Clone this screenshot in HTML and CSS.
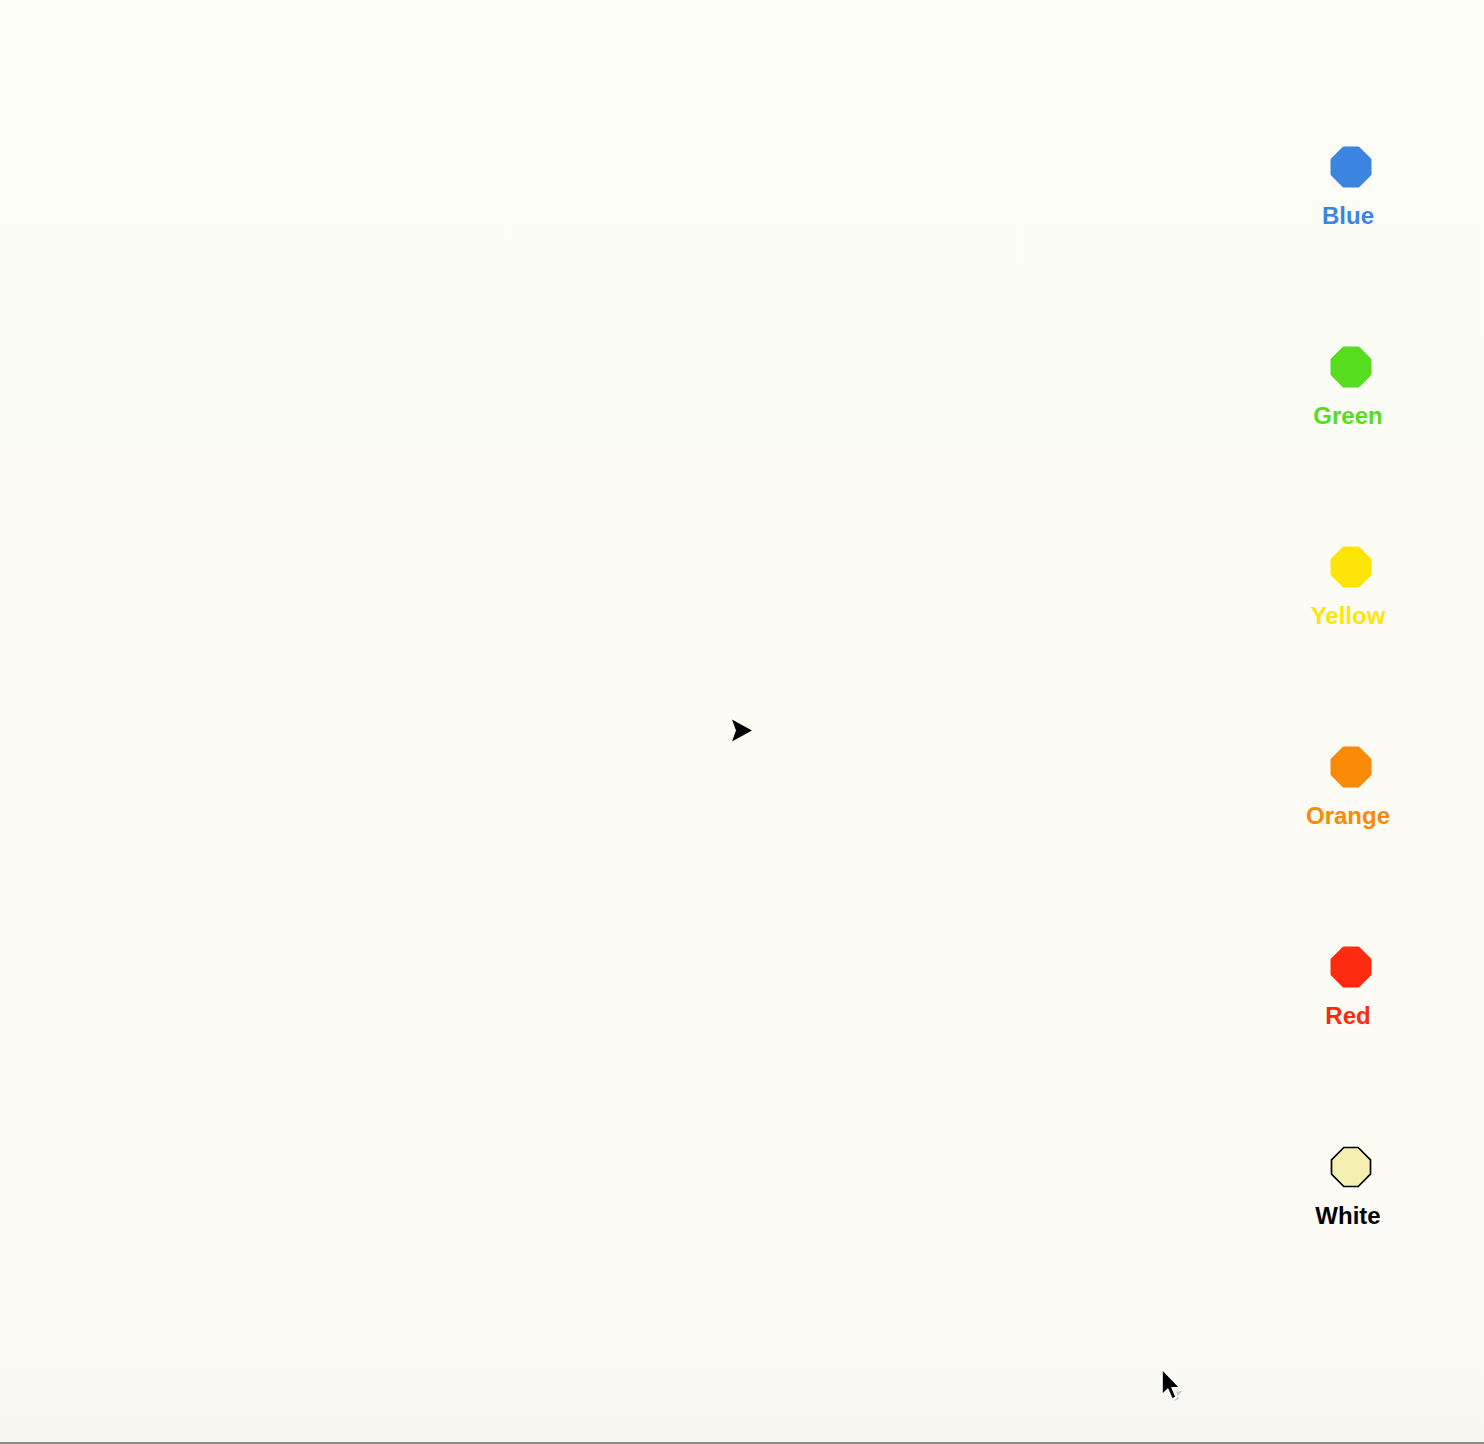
FILE: index.html
```html
<!DOCTYPE html>
<html>
<head>
<meta charset="utf-8">
<link rel="stylesheet" href="styles.css">
</head>
<body>
<div class="canvas">
  <div class="palette">
    <div class="swatch">
      <svg class="dot" viewBox="0 0 42 42"><polygon points="14,2.5 28,2.5 39.5,14 39.5,28 28,39.5 14,39.5 2.5,28 2.5,14" fill="#3b85e0" stroke="#3b85e0" stroke-width="4" stroke-linejoin="round"/></svg>
      <span class="label blue">Blue</span>
    </div>
    <div class="swatch">
      <svg class="dot" viewBox="0 0 42 42"><polygon points="14,2.5 28,2.5 39.5,14 39.5,28 28,39.5 14,39.5 2.5,28 2.5,14" fill="#56de1e" stroke="#56de1e" stroke-width="4" stroke-linejoin="round"/></svg>
      <span class="label green">Green</span>
    </div>
    <div class="swatch">
      <svg class="dot" viewBox="0 0 42 42"><polygon points="14,2.5 28,2.5 39.5,14 39.5,28 28,39.5 14,39.5 2.5,28 2.5,14" fill="#fde50a" stroke="#fde50a" stroke-width="4" stroke-linejoin="round"/></svg>
      <span class="label yellow">Yellow</span>
    </div>
    <div class="swatch">
      <svg class="dot" viewBox="0 0 42 42"><polygon points="14,2.5 28,2.5 39.5,14 39.5,28 28,39.5 14,39.5 2.5,28 2.5,14" fill="#f98a08" stroke="#f98a08" stroke-width="4" stroke-linejoin="round"/></svg>
      <span class="label orange">Orange</span>
    </div>
    <div class="swatch">
      <svg class="dot" viewBox="0 0 42 42"><polygon points="14,2.5 28,2.5 39.5,14 39.5,28 28,39.5 14,39.5 2.5,28 2.5,14" fill="#fc2b0f" stroke="#fc2b0f" stroke-width="4" stroke-linejoin="round"/></svg>
      <span class="label red">Red</span>
    </div>
    <div class="swatch">
      <svg class="dot" viewBox="0 0 42 42"><polygon points="13.8,1.5 28.2,1.5 40.5,13.8 40.5,28.2 28.2,40.5 13.8,40.5 1.5,28.2 1.5,13.8" fill="#f5efb2" stroke="#000" stroke-width="1.7" stroke-linejoin="round"/></svg>
      <span class="label white">White</span>
    </div>
  </div>
  <svg class="turtle" viewBox="0 0 22 24"><polygon points="1,0.5 21,11.5 1,22.5 5,11.5" fill="#000"/></svg>
  <svg class="cursor" viewBox="0 0 24 36"><path d="M14 33 L19 31 L16 23.5 L22 23 Z" fill="rgba(0,0,0,0.18)"/><path d="M2 1 L2 27 L7.8 21.3 L12 31 L16.2 29.2 L12.1 19.8 L20 19.8 Z" fill="#000" stroke="#fff" stroke-width="1.6" stroke-linejoin="round"/></svg>
</div>
</body>
</html>
```

FILE: styles.css
```css
html, body {
  margin: 0;
  padding: 0;
}

body {
  width: 1484px;
  height: 1444px;
  overflow: hidden;
  font-family: "Liberation Sans", Arial, sans-serif;
}

.canvas {
  position: relative;
  height: 1442px;
  border-bottom: 2px solid #8a8a84;
  background: linear-gradient(to bottom, #fdfdf7 0%, #fcfcf5 85%, #f8f7f2 100%);
  display: flex;
  justify-content: flex-end;
}

.palette {
  display: flex;
  flex-direction: column;
  gap: 116px;
  padding-top: 146px;
  padding-right: 86px;
  width: 100px;
}

.swatch {
  display: flex;
  flex-direction: column;
  align-items: center;
  gap: 14px;
}

.dot {
  width: 42px;
  height: 42px;
  display: block;
  margin-left: 6px;
}

.label {
  font-size: 24px;
  font-weight: bold;
  line-height: 28px;
}

.blue { color: #3b85e0; }
.green { color: #56de1e; }
.yellow { color: #fde50a; }
.orange { color: #f98a08; }
.red { color: #fc2b0f; }
.white { color: #000; }

.turtle {
  position: absolute;
  left: 731px;
  top: 719px;
  width: 22px;
  height: 24px;
}

.cursor {
  position: absolute;
  left: 1160px;
  top: 1368px;
  width: 24px;
  height: 36px;
}
```
